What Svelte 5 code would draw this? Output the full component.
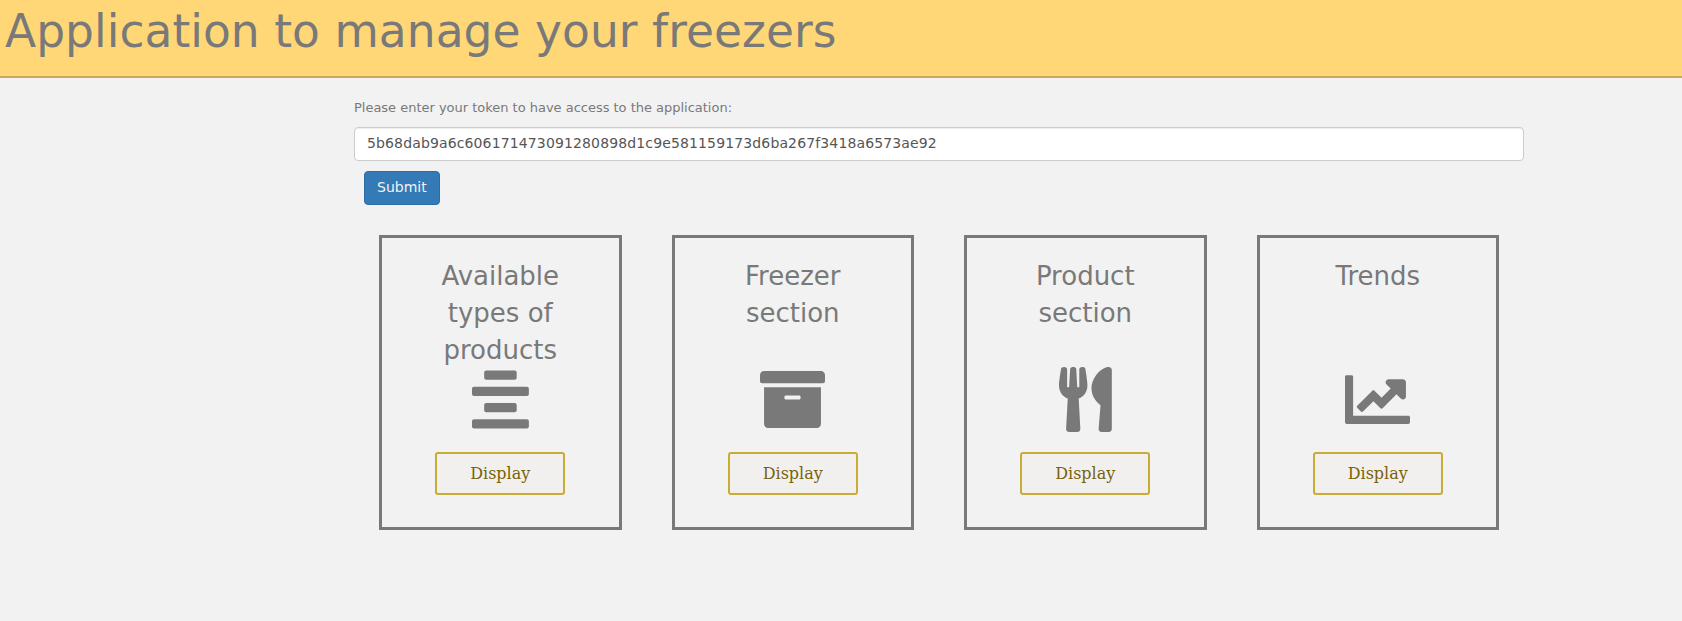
<script>
  let token = $state('5b68dab9a6c606171473091280898d1c9e581159173d6ba267f3418a6573ae92');

  const sections = [
    {
      title: 'Available types of products',
      width: 448,
      path: 'M352 44v40c0 8.837-7.163 16-16 16H112c-8.837 0-16-7.163-16-16V44c0-8.837 7.163-16 16-16h224c8.837 0 16 7.163 16 16zM16 228h416c8.837 0 16-7.163 16-16v-40c0-8.837-7.163-16-16-16H16c-8.837 0-16 7.163-16 16v40c0 8.837 7.163 16 16 16zm0 256h416c8.837 0 16-7.163 16-16v-40c0-8.837-7.163-16-16-16H16c-8.837 0-16 7.163-16 16v40c0 8.837 7.163 16 16 16zm320-200H112c-8.837 0-16 7.163-16 16v40c0 8.837 7.163 16 16 16h224c8.837 0 16-7.163 16-16v-40c0-8.837-7.163-16-16-16z'
    },
    {
      title: 'Freezer section',
      width: 512,
      path: 'M32 448c0 17.7 14.3 32 32 32h384c17.7 0 32-14.3 32-32V160H32v288zm160-212c0-6.6 5.4-12 12-12h104c6.6 0 12 5.4 12 12v8c0 6.6-5.4 12-12 12H204c-6.6 0-12-5.4-12-12v-8zM480 32H32C14.3 32 0 46.3 0 64v48c0 8.8 7.2 16 16 16h480c8.8 0 16-7.2 16-16V64c0-17.7-14.3-32-32-32z'
    },
    {
      title: 'Product section',
      width: 416,
      path: 'M207.9 15.2c.8 4.7 16.1 94.5 16.1 128.8 0 52.3-27.8 89.6-68.9 104.6L168 486.7c.7 13.7-10.2 25.3-24 25.3H80c-13.7 0-24.7-11.5-24-25.3l12.9-238.1C27.7 233.6 0 196.2 0 144 0 109.6 15.3 19.9 16.1 15.2 19.3-5.1 61.4-5.4 64 16.3v141.2c1.3 3.4 15.1 3.2 16 0 1.4-25.3 7.9-139.2 8-141.8 3.3-20.8 44.7-20.8 47.9 0 .2 2.7 6.6 116.5 8 141.8.9 3.2 14.8 3.4 16 0V16.3c2.6-21.6 44.8-21.4 48-1.1zm119.2 285.7l-15 185.1c-1.2 14 9.9 26 23.9 26h56c13.3 0 24-10.7 24-24V24c0-13.2-10.7-24-24-24-82.5 0-221.4 178.5-64.9 300.9z'
    },
    {
      title: 'Trends',
      width: 512,
      path: 'M500 384c6.6 0 12 5.4 12 12v40c0 6.6-5.4 12-12 12H12c-6.6 0-12-5.4-12-12V76c0-6.6 5.4-12 12-12h40c6.6 0 12 5.4 12 12v308h436zM456 96H344c-21.4 0-32.1 25.9-17 41l32.9 32.9-72 72.9-55.6-55.6c-4.7-4.7-12.2-4.7-16.9 0L96.4 305c-4.7 4.6-4.8 12.2-.2 16.9l28.5 29.4c4.7 4.8 12.4 4.9 17.1.1l82.1-82.1 55.5 55.5c4.7 4.7 12.3 4.7 17 0l109.2-109.2L439 249c15.1 15.1 41 4.4 41-17V120c0-13.3-10.7-24-24-24z'
    }
  ];
</script>

<header>
  <h1>Application to manage your freezers</h1>
</header>

<main>
  <form onsubmit={(e) => e.preventDefault()}>
    <label for="token">Please enter your token to have access to the application:</label>
    <input id="token" type="text" bind:value={token} />
    <button class="submit" type="submit">Submit</button>
  </form>

  <div class="cards">
    {#each sections as section}
      <section class="card">
        <h2>{section.title}</h2>
        <svg viewBox="0 0 {section.width} 512" width={(section.width * 65) / 512} height="65" aria-hidden="true">
          <path d={section.path} />
        </svg>
        <button class="display" type="button">Display</button>
      </section>
    {/each}
  </div>
</main>

<style>
  :global(body) {
    margin: 0;
    background: #f2f2f2;
    font-family: 'DejaVu Sans', sans-serif;
    color: #797979;
  }

  header,
  header *,
  main,
  main * {
    box-sizing: border-box;
  }

  header {
    height: 78px;
    padding: 1px 0 0 5px;
    background: #ffd777;
    border-bottom: 2px solid #c9a958;
  }

  h1 {
    margin: 0;
    font-size: 45.5px;
    font-weight: 400;
    line-height: 62px;
    letter-spacing: 0.045px;
    white-space: nowrap;
  }

  main {
    width: 1170px;
    margin-left: 354px;
    padding-top: 20px;
  }

  form {
    display: flex;
    flex-direction: column;
    align-items: flex-start;
  }

  label {
    font-size: 13px;
    line-height: 19px;
    letter-spacing: -0.015px;
    margin-bottom: 10px;
  }

  input {
    width: 100%;
    height: 34px;
    padding: 5px 12px 7px;
    border: 1px solid #ccc;
    border-radius: 4px;
    background: #fff;
    box-shadow: inset 0 1px 1px rgba(0, 0, 0, 0.075);
    color: #555;
    font: 14px/20px 'DejaVu Sans', sans-serif;
    letter-spacing: 0.134px;
  }

  .submit {
    height: 34px;
    margin: 10px 0 0 10px;
    padding: 5px 12px 7px;
    border: 1px solid #2e6da4;
    border-radius: 4px;
    background: #337ab7;
    color: #f2f2f2;
    font: 14px/20px 'DejaVu Sans', sans-serif;
  }

  .cards {
    display: grid;
    grid-template-columns: repeat(4, 1fr);
    gap: 50px;
    padding: 30px 25px 0;
  }

  .card {
    display: flex;
    flex-direction: column;
    align-items: center;
    height: 295px;
    padding: 20px 42px 0;
    border: 3px solid #797979;
  }

  h2 {
    height: 109px;
    margin: 0;
    font-size: 26px;
    font-weight: 400;
    line-height: 37px;
    text-align: center;
  }

  svg {
    flex: none;
    fill: #797979;
  }

  .display {
    flex: none;
    width: 130px;
    height: 43px;
    margin-top: 20px;
    padding: 0;
    border: 2px solid #c9ac34;
    border-radius: 3px;
    background: #f2f0ee;
    color: #776208;
    font: 16px/23px 'DejaVu Serif', serif;
  }
</style>
